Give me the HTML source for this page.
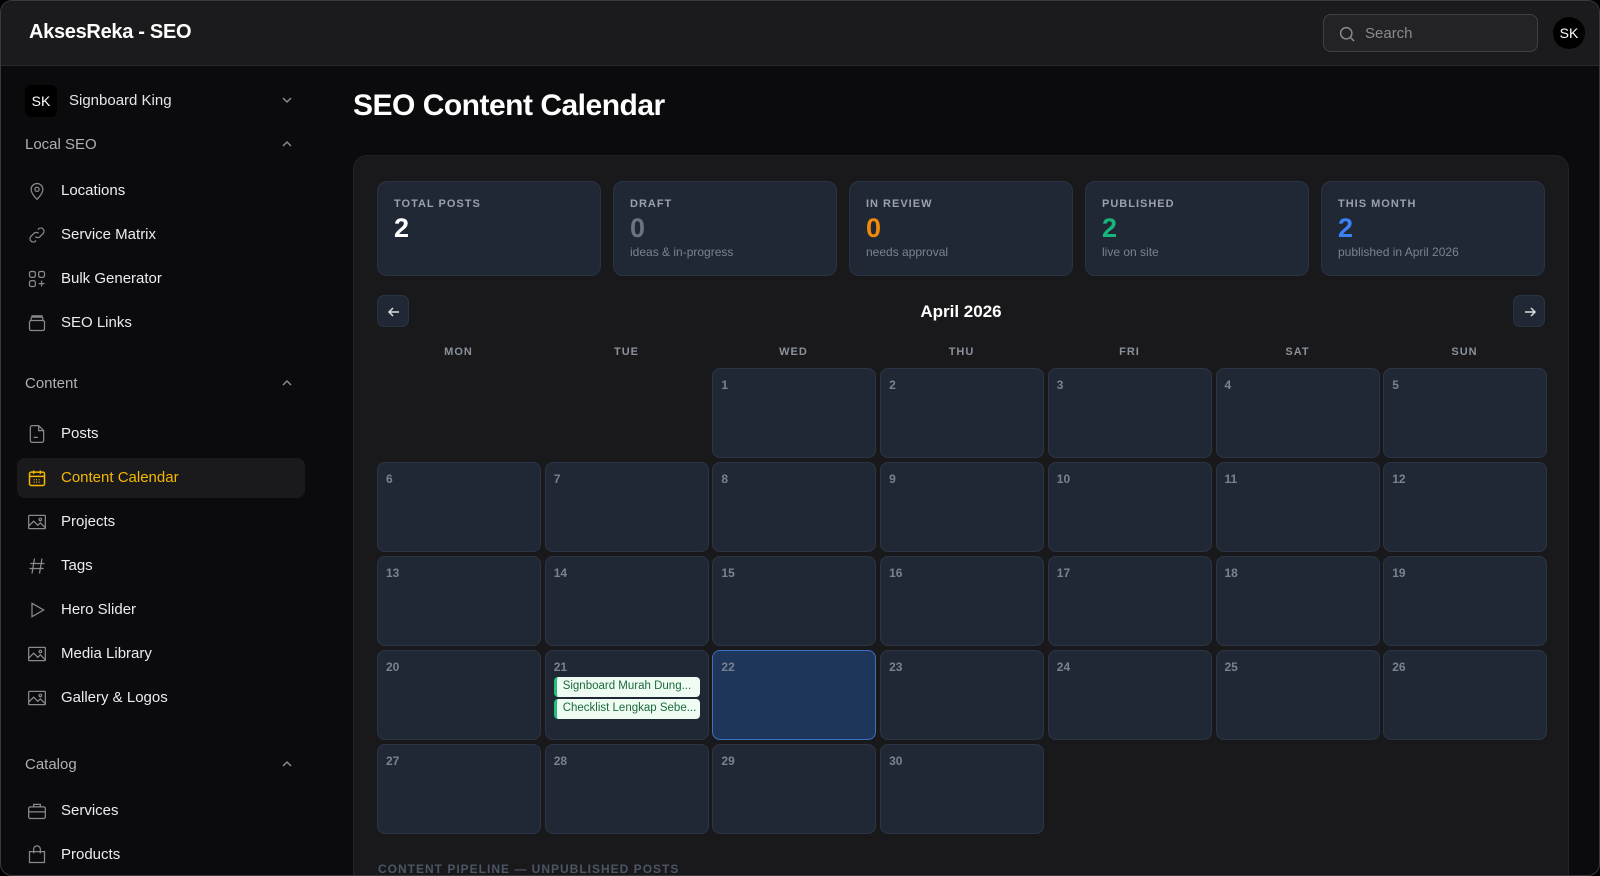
<!DOCTYPE html>
<html><head><meta charset="utf-8"><style>
*{box-sizing:border-box;margin:0;padding:0}
body{width:1600px;height:876px;background:#000;font-family:"Liberation Sans",sans-serif;overflow:hidden}
.win{position:absolute;left:0;top:0;width:1600px;height:876px;background:#0b0b0d;border:1px solid #3a3a3c;border-radius:12px;overflow:hidden}
.hdr{position:absolute;left:0;top:0;right:0;height:65px;background:#1b1b1d;border-bottom:1px solid #2a2a2c}
.hdr .t{position:absolute;left:28px;top:20px;color:#fff;font-size:20px;font-weight:bold;letter-spacing:-0.3px}
.search{position:absolute;left:1322px;top:13px;width:215px;height:38px;border:1px solid #404042;border-radius:8px;background:#232325;color:#8a8a8e;font-size:15px;padding:10px 0 0 41px}
.search svg{position:absolute;left:14px;top:10px}
.av{position:absolute;left:1552px;top:16px;width:32px;height:32px;border-radius:50%;background:#000;color:#fff;font-size:14px;text-align:center;line-height:32px}
.side{position:absolute;left:0;top:65px;width:350px;bottom:0}
.ws{position:absolute;left:24px;top:19px;width:32px;height:32px;background:#000;border-radius:6px;color:#fff;font-size:14px;text-align:center;line-height:32px}
.wsn{position:absolute;left:68px;top:26px;color:#e5e5e7;font-size:15px}
.chev{position:absolute;left:280px}
.sec{position:absolute;left:24px;color:#b0b0b4;font-size:15px}
.it{position:absolute;left:16px;width:288px;height:40px;color:#ececee;font-size:15px}
.it span{position:absolute;left:44px;top:11px}
.it svg{position:absolute;left:10px;top:10px}
.it.act{background:#1a1a1c;border-radius:8px;color:#f5b800}
h1{position:absolute;left:352px;top:88px;color:#fff;font-size:30px;font-weight:bold;letter-spacing:-0.5px}
.panel{position:absolute;left:352px;top:154px;width:1216px;height:740px;background:#19191b;border:1px solid #222224;border-radius:14px}
.card{position:absolute;top:25px;width:224px;height:95px;background:#202836;border:1px solid #2a3344;border-radius:10px;padding:16px 16px}
.card .l{font-size:11px;font-weight:bold;letter-spacing:1px;color:#9aa1ad}
.card .n{font-size:27px;font-weight:900;margin-top:3px;line-height:30px}
.card .s{font-size:12px;color:#7a8290;margin-top:2px}
.btn{position:absolute;top:139px;width:32px;height:32px;background:#202836;border:1px solid #2a3344;border-radius:7px}
.btn svg{position:absolute;left:8px;top:8px}
.mon{position:absolute;left:0;width:100%;top:146px;text-align:center;color:#fff;font-size:17px;font-weight:bold}
.dh{position:absolute;top:190px;width:163px;text-align:center;color:#8a919c;font-size:11px;font-weight:bold;letter-spacing:1px}
.c{position:absolute;width:164px;height:90px;background:#202836;border:1px solid #2c3546;border-radius:8px}
.c b{position:absolute;left:8px;top:9px;font-size:12px;color:#7a8290}
.c.today{background:#1d365a;border-color:#3b6fc0}
.ev{position:absolute;left:8px;width:146px;height:20px;background:#effcf4;border-left:3px solid #22c07a;border-radius:4px;color:#1c6b3a;font-size:11.5px;padding:3px 0 0 6px;white-space:nowrap;overflow:hidden}
.pl{position:absolute;left:24px;top:706px;color:#4b5564;font-size:12px;font-weight:bold;letter-spacing:1px}
</style></head><body><div class="win">
<div class="hdr"><div class="t">AksesReka - SEO</div>
<div class="search"><svg width="18" height="18" viewBox="0 0 24 24" fill="none" stroke="#8a8a8e" stroke-width="2"><circle cx="11" cy="11" r="7.5"/><path d="M17 17l4.5 4.5"/></svg>Search</div>
<div class="av">SK</div></div>
<div class="side">
<div class="ws">SK</div><div class="wsn">Signboard King</div>
<svg class="chev" style="top:28px" width="12" height="12" viewBox="0 0 12 12" fill="none" stroke="#8a8a8e" stroke-width="1.5"><path d="M2 4l4 4 4-4"/></svg>
<div class="sec" style="top:70px">Local SEO</div>
<svg class="chev" style="top:72px" width="12" height="12" viewBox="0 0 12 12" fill="none" stroke="#8a8a8e" stroke-width="1.5"><path d="M2 8l4-4 4 4"/></svg>
<div class="it" style="top:105px"><svg width="20" height="20" viewBox="0 0 24 24" fill="none" stroke="#8a8a8e" stroke-width="1.5"><path d="M12 22s7-6.5 7-12a7 7 0 0 0-14 0c0 5.5 7 12 7 12z"/><circle cx="12" cy="10" r="2.5"/></svg><span>Locations</span></div>
<div class="it" style="top:149px"><svg width="20" height="20" viewBox="0 0 24 24" fill="none" stroke="#8a8a8e" stroke-width="1.5"><path d="M10 14a4 4 0 0 0 5.6 0l4-4a4 4 0 0 0-5.6-5.6l-1 1M14 10a4 4 0 0 0-5.6 0l-4 4a4 4 0 0 0 5.6 5.6l1-1"/></svg><span>Service Matrix</span></div>
<div class="it" style="top:193px"><svg width="20" height="20" viewBox="0 0 24 24" fill="none" stroke="#8a8a8e" stroke-width="1.5"><rect x="3" y="3" width="7" height="7" rx="2"/><rect x="14" y="3" width="7" height="7" rx="2"/><rect x="3" y="14" width="7" height="7" rx="2"/><path d="M17.5 14v7M14 17.5h7"/></svg><span>Bulk Generator</span></div>
<div class="it" style="top:237px"><svg width="20" height="20" viewBox="0 0 24 24" fill="none" stroke="#8a8a8e" stroke-width="1.5"><rect x="3" y="9" width="18" height="12" rx="2"/><path d="M5 9V6.5a1.5 1.5 0 0 1 1.5-1.5h11A1.5 1.5 0 0 1 19 6.5V9M6 5V3.5h12V5"/></svg><span>SEO Links</span></div>
<div class="sec" style="top:309px">Content</div>
<svg class="chev" style="top:311px" width="12" height="12" viewBox="0 0 12 12" fill="none" stroke="#8a8a8e" stroke-width="1.5"><path d="M2 8l4-4 4 4"/></svg>
<div class="it" style="top:348px"><svg width="20" height="20" viewBox="0 0 24 24" fill="none" stroke="#8a8a8e" stroke-width="1.5"><path d="M14 2H6a2 2 0 0 0-2 2v16a2 2 0 0 0 2 2h12a2 2 0 0 0 2-2V8z"/><path d="M14 2v6h6M8 16h5"/></svg><span>Posts</span></div>
<div class="it act" style="top:392px"><svg width="20" height="20" viewBox="0 0 24 24" fill="none" stroke="#f5b800" stroke-width="1.8"><rect x="3" y="5" width="18" height="16" rx="2"/><path d="M3 10h18M8 3v4M16 3v4M8 14h1M11 14h1M14 14h1M17 14h0M8 17h1M11 17h1M14 17h1"/></svg><span>Content Calendar</span></div>
<div class="it" style="top:436px"><svg width="20" height="20" viewBox="0 0 24 24" fill="none" stroke="#8a8a8e" stroke-width="1.5"><rect x="2" y="4" width="20" height="16" rx="1"/><path d="M2 17l6-6 5 5 3-3 6 6"/><circle cx="16" cy="9" r="1.5"/></svg><span>Projects</span></div>
<div class="it" style="top:480px"><svg width="20" height="20" viewBox="0 0 24 24" fill="none" stroke="#8a8a8e" stroke-width="1.5"><path d="M9 3L6 21M18 3l-3 18M4 9h17M3 15h17"/></svg><span>Tags</span></div>
<div class="it" style="top:524px"><svg width="20" height="20" viewBox="0 0 24 24" fill="none" stroke="#8a8a8e" stroke-width="1.5"><path d="M6 4l14 8-14 8z"/></svg><span>Hero Slider</span></div>
<div class="it" style="top:568px"><svg width="20" height="20" viewBox="0 0 24 24" fill="none" stroke="#8a8a8e" stroke-width="1.5"><rect x="2" y="4" width="20" height="16" rx="1"/><path d="M2 17l6-6 5 5 3-3 6 6"/><circle cx="16" cy="9" r="1.5"/></svg><span>Media Library</span></div>
<div class="it" style="top:612px"><svg width="20" height="20" viewBox="0 0 24 24" fill="none" stroke="#8a8a8e" stroke-width="1.5"><rect x="2" y="4" width="20" height="16" rx="1"/><path d="M2 17l6-6 5 5 3-3 6 6"/><circle cx="16" cy="9" r="1.5"/></svg><span>Gallery &amp; Logos</span></div>
<div class="sec" style="top:690px">Catalog</div>
<svg class="chev" style="top:692px" width="12" height="12" viewBox="0 0 12 12" fill="none" stroke="#8a8a8e" stroke-width="1.5"><path d="M2 8l4-4 4 4"/></svg>
<div class="it" style="top:725px"><svg width="20" height="20" viewBox="0 0 24 24" fill="none" stroke="#8a8a8e" stroke-width="1.5"><rect x="2" y="7" width="20" height="14" rx="2"/><path d="M8 7V4h8v3M2 13h20"/></svg><span>Services</span></div>
<div class="it" style="top:769px"><svg width="20" height="20" viewBox="0 0 24 24" fill="none" stroke="#8a8a8e" stroke-width="1.5"><path d="M3 8h18v13H3z"/><path d="M8 10V5a4 4 0 0 1 8 0v5"/></svg><span>Products</span></div>
</div>
<h1>SEO Content Calendar</h1>
<div class="panel">
<div class="card" style="left:23px"><div class="l">TOTAL POSTS</div><div class="n" style="color:#fff">2</div></div>
<div class="card" style="left:259px"><div class="l">DRAFT</div><div class="n" style="color:#6b7280">0</div><div class="s">ideas &amp; in-progress</div></div>
<div class="card" style="left:495px"><div class="l">IN REVIEW</div><div class="n" style="color:#f08a0c">0</div><div class="s">needs approval</div></div>
<div class="card" style="left:731px"><div class="l">PUBLISHED</div><div class="n" style="color:#18b57a">2</div><div class="s">live on site</div></div>
<div class="card" style="left:967px"><div class="l">THIS MONTH</div><div class="n" style="color:#3b82f6">2</div><div class="s">published in April 2026</div></div>
<div class="btn" style="left:23px"><svg width="16" height="16" viewBox="0 0 16 16" fill="none" stroke="#ddd" stroke-width="1.5"><path d="M13 8H3M7 4L3 8l4 4"/></svg></div>
<div class="mon">April 2026</div>
<div class="btn" style="left:1159px"><svg width="16" height="16" viewBox="0 0 16 16" fill="none" stroke="#ddd" stroke-width="1.5"><path d="M3 8h10M9 4l4 4-4 4"/></svg></div>
<div class="dh" style="left:23px">MON</div><div class="dh" style="left:191px">TUE</div><div class="dh" style="left:358px">WED</div><div class="dh" style="left:526px">THU</div><div class="dh" style="left:694px">FRI</div><div class="dh" style="left:862px">SAT</div><div class="dh" style="left:1029px">SUN</div>
<div id="g"></div>
<div class="pl">CONTENT PIPELINE — UNPUBLISHED POSTS</div>
</div>
</div>
<script>
var g=document.getElementById('g'),h='';
for(var d=1;d<=30;d++){var i=d+1,col=i%7,row=Math.floor(i/7);
var x=23+col*167.7,y=212+row*94;
h+='<div class="c'+(d==22?' today':'')+'" style="left:'+x+'px;top:'+y+'px"><b>'+d+'</b>'+
(d==21?'<div class="ev" style="top:26px">Signboard Murah Dung...</div><div class="ev" style="top:48px">Checklist Lengkap Sebe...</div>':'')+'</div>';}
g.innerHTML=h;
</script>
</body></html>
